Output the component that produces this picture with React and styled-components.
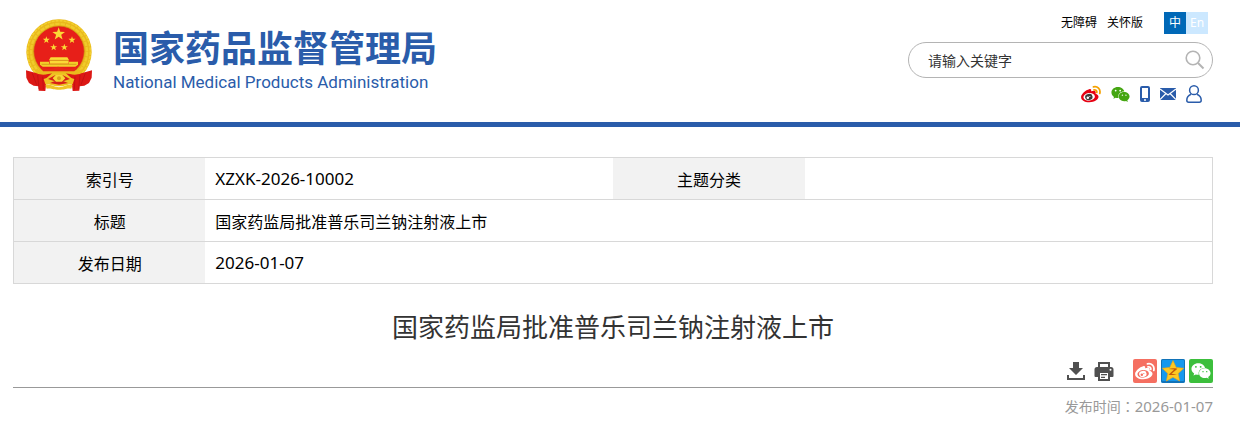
import React from 'react'
import styled, { createGlobalStyle } from 'styled-components'
import { FaWeixin } from 'react-icons/fa'

const GlobalStyle = createGlobalStyle`
    * {
        box-sizing: border-box;
    }
    body {
        margin: 0;
        background: #fff;
        color: #000;
        font-family: 'Noto Sans', 'Noto Sans CJK SC', sans-serif;
        font-size: 16px;
    }
    a {
        color: inherit;
        text-decoration: none;
    }
    svg {
        display: block;
    }
    button, input {
        font-family: inherit;
    }
`

const Header = styled.header`
    display: flex;
    justify-content: space-between;
    align-items: flex-start;
    padding: 12px 27px 20px 24px;
    border-bottom: 5px solid #2a5caa;
`

const Brand = styled.a`
    display: flex;
    align-items: center;
    gap: 17px;
    padding-top: 5px;
    color: #2a5caa;
`

const BrandText = styled.div`
    display: flex;
    flex-direction: column;
    gap: 6px;
    padding-top: 8px;
    white-space: nowrap;
`

const BrandName = styled.span`
    font-family: 'Noto Sans CJK SC', sans-serif;
    font-size: 36px;
    font-weight: 700;
    line-height: 40px;
`

const BrandSub = styled.span`
    font-family: Roboto, sans-serif;
    font-size: 17px;
    line-height: 20px;
`

const Tools = styled.div`
    display: flex;
    flex-direction: column;
    align-items: flex-end;
    gap: 8px;
    width: 305px;
`

const TopLinks = styled.nav`
    display: flex;
    align-items: center;
    gap: 10px;
    padding-right: 5px;
    font-size: 12px;
    line-height: 22px;
`

const Lang = styled.div`
    display: flex;
    margin-left: 11px;
`

const LangLink = styled.a`
    width: 22px;
    height: 22px;
    background: ${props => props.$active ? '#0068b7' : '#cce8ff'};
    color: #fff;
    text-align: center;
`

const SearchBox = styled.form`
    display: flex;
    align-items: center;
    width: 100%;
    height: 36px;
    padding: 0 7px 0 19px;
    border: 1px solid #b4b4b4;
    border-radius: 18px;
    input {
        flex: 1;
        min-width: 0;
        padding: 0;
        border: 0;
        outline: none;
        background: none;
        font-size: 14px;
    }
    input::placeholder {
        color: #333;
        opacity: 1;
    }
    button {
        padding: 0;
        border: 0;
        background: none;
        cursor: pointer;
    }
`

const Social = styled.div`
    display: flex;
    align-items: center;
    gap: 10px;
    height: 16px;
    padding-right: 11px;
    color: #2a5caa;
`

const Main = styled.main`
    padding: 30px 27px 10px 13px;
`

const InfoTable = styled.table`
    width: 100%;
    table-layout: fixed;
    border-collapse: collapse;
    border: 1px solid #d8d8d8;
    tr {
        height: 42px;
        border-bottom: 1px solid #d8d8d8;
    }
    th {
        width: 16%;
        padding: 0;
        background: #f2f2f2;
        font-weight: 400;
    }
    td {
        padding: 0 10px;
    }
`

const Code = styled.span`
    font-size: 17px;
    line-height: 20px;
`

const Title = styled.h1`
    margin: 23px 0 12px;
    color: #333;
    font-size: 26px;
    font-weight: 400;
    line-height: 40px;
    text-align: center;
`

const ActionBar = styled.div`
    display: flex;
    justify-content: flex-end;
    align-items: center;
    gap: 8px;
    padding-bottom: 4px;
    border-bottom: 1px solid #999;
`

const Action = styled.button`
    width: 20px;
    height: 20px;
    padding: 0;
    border: 0;
    background: none;
    color: #505050;
    cursor: pointer;
`

const Shares = styled.div`
    display: flex;
    gap: 4px;
    margin-left: 11px;
`

const Share = styled.a`
    display: flex;
    align-items: center;
    justify-content: center;
    width: 24px;
    height: 24px;
    border-radius: 2px;
    background: ${props => props.$color};
    color: #fff;
`

const Published = styled.p`
    margin: 8px 0 0;
    color: #999;
    font-size: 14px;
    line-height: 20px;
    text-align: right;
    time {
        font-size: 15px;
    }
`

const Colon = styled.span`
    font-family: 'Noto Sans CJK TC', sans-serif;
`

const star = (cx, cy, r) => {
    const points = []
    for (let i = 0; i < 10; i++) {
        const a = -Math.PI / 2 + i * Math.PI / 5
        const d = i % 2 ? r * 0.4 : r
        points.push(`${(cx + d * Math.cos(a)).toFixed(1)},${(cy + d * Math.sin(a)).toFixed(1)}`)
    }
    return points.join(' ')
}

function Emblem() {
    return (
        <svg width="72" height="76" viewBox="27 21 216 228" aria-hidden="true">
            <circle cx="132" cy="126" r="98" fill="#e9b91c" />
            <circle cx="132" cy="126" r="94" fill="none" stroke="#f3d030" strokeWidth="5" strokeDasharray="9 3" />
            <circle cx="132" cy="126" r="84" fill="none" stroke="#f1cb2b" strokeWidth="7" strokeDasharray="13 3" />
            <circle cx="132" cy="124" r="76" fill="#e71f19" stroke="#cf9a12" strokeWidth="2" />
            <g fill="#fbd936">
                <polygon points={star(131, 72, 20)} />
                <polygon points={star(94, 90, 11)} />
                <polygon points={star(171, 90, 11)} />
                <polygon points={star(116, 112, 11)} />
                <polygon points={star(148, 112, 11)} />
                <path d="M107 142h50l5 8h-60zM104 151h57v10h-57z" />
                <path d="M75 155h27v6h60v-6h27v9l-8 6H83l-8-6z" fill="#f3cf2a" />
            </g>
            <path d="M102 151h60M80 163h104" stroke="#c98d10" strokeWidth="2" fill="none" />
            <path d="M62 178c18 4 34 8 47 3 15-7 31-7 46 0 13 5 29 1 47-3l-6 24c-20 12-108 12-128 0z" fill="#eabb1d" />
            <path d="M78 172c22 10 36 3 51-2 17 5 32 12 56 2l-7 12H84z" fill="#e52a17" />
            <path d="M33 181l32 9c18 8 35 2 46 0l-16 18-4 35-20-1-1-13-14-2-14-8-8-16zM231 181l-32 9c-18 8-35 2-46 0l16 18 4 35 20-1 1-13 14-2 14-8 8-16z" fill="#dc1815" />
            <path d="M52 190l13 34M68 195l4 42M83 200l2 38M211 190l-13 34M195 195l-4 42M180 200l-2 38" stroke="#b80f12" strokeWidth="2" fill="none" />
            <path d="M86 207c13-1 19-17 33-17h26c14 0 20 16 33 17l-5 15c-14-1-19 7-41 7s-27-8-41-7z" fill="#efc323" />
            <path d="M99 207l21-11h24l21 11-18 6h-30zM105 219l15-6h24l15 6-27 5z" fill="#d82018" />
            <path d="M113 205l9-10h20l9 10-10 10h-18z" fill="#f7d534" />
            <circle cx="132" cy="205" r="6" fill="#dba51b" />
            <path d="M91 224c12-5 25 8 41 8s29-13 41-8l-4 12c-15-3-18 3-37 3s-22-6-37-3z" fill="#f0c526" />
        </svg>
    )
}

function WeiboMark({ mono }) {
    const body = mono ? '#fff' : '#e60012'
    const eye = mono ? '#f56f61' : '#fff'
    const wave = mono ? '#fff' : '#f5a100'
    return (
        <svg width="20" height="20" viewBox="0 0 24 24" aria-hidden="true">
            <path d="M9.8 6.2c1.8-.7 3 .4 2.3 2.6 2.8-1 5.9-1 5.6 1.5 0 .5-.3 1-.2 1.3 2.2.5 3.5 1.9 3.5 3.7 0 3.4-4.9 6.5-11 6.5-6 0-9.9-2.5-9.9-6.3 0-3.5 5.7-8.4 9.7-9.3z" fill={body} />
            <ellipse cx="9.8" cy="15.4" rx="6.9" ry="4.5" transform="rotate(-7 9.8 15.4)" fill={eye} />
            <ellipse cx="9.4" cy="15.6" rx="4.5" ry="3.8" transform="rotate(-12 9.4 15.6)" fill={mono ? body : '#3e3a39'} />
            <circle cx="8.2" cy="16.5" r="1.5" fill={eye} />
            <circle cx="10.6" cy="15" r=".7" fill={eye} />
            <path d="M15 3.5c4.7-1.2 8.9 2.8 7.5 7.8M15.6 7c2-.4 3.8 1.2 3.3 3.2" fill="none" stroke={wave} strokeWidth="2.1" strokeLinecap="round" />
        </svg>
    )
}

function SearchIcon() {
    return (
        <svg width="20" height="20" viewBox="0 0 20 20" fill="none" stroke="#b4b4b4" aria-hidden="true">
            <circle cx="8" cy="8" r="6.8" strokeWidth="1.6" />
            <path d="M13 13l5.5 5.5" strokeWidth="2" />
        </svg>
    )
}

function PhoneIcon() {
    return (
        <svg width="10" height="16" viewBox="0 0 10 16" aria-hidden="true">
            <path fillRule="evenodd" fill="currentColor" d="M2 0h6a2 2 0 0 1 2 2v12a2 2 0 0 1-2 2H2a2 2 0 0 1-2-2V2a2 2 0 0 1 2-2zM2 2v10h6V2zM5 13a1 1 0 1 0 0 2 1 1 0 0 0 0-2z" />
        </svg>
    )
}

function MailIcon() {
    return (
        <svg width="16" height="12" viewBox="0 0 16 12" aria-hidden="true">
            <path d="M0 0h16v12H0z" fill="currentColor" />
            <path d="M0 1l8 6 8-6M0 11.5l6-6M16 11.5l-6-6" fill="none" stroke="#fff" strokeWidth="1.2" />
        </svg>
    )
}

function UserIcon() {
    return (
        <svg width="16" height="18" viewBox="0 0 16 18" fill="none" stroke="currentColor" strokeWidth="1.5" aria-hidden="true">
            <circle cx="8" cy="5.2" r="4.4" />
            <path d="M5 9.2C2.3 10.3.8 12.4.8 15.2c0 1.3.6 2 1.9 2h10.6c1.3 0 1.9-.7 1.9-2 0-2.8-1.5-4.9-4.2-6" />
        </svg>
    )
}

function DownloadIcon() {
    return (
        <svg width="20" height="20" viewBox="0 0 20 20" aria-hidden="true">
            <path d="M7 1h6v6h4l-7 7-7-7h4z" fill="currentColor" />
            <path d="M2 14v4h16v-4" fill="none" stroke="currentColor" strokeWidth="2" />
        </svg>
    )
}

function PrintIcon() {
    return (
        <svg width="20" height="20" viewBox="0 0 20 20" aria-hidden="true">
            <path d="M5 6V2h10v4" fill="none" stroke="currentColor" strokeWidth="2" />
            <path d="M3 6h14a2.5 2.5 0 0 1 2.5 2.5V15a1 1 0 0 1-1 1h-17a1 1 0 0 1-1-1V8.500A2.5 2.5 0 0 1 3 6z" fill="currentColor" />
            <path d="M5 11h10v8H5z" fill="#fff" stroke="currentColor" strokeWidth="2" />
            <path d="M7 13.700h6M7 16.300h4" stroke="currentColor" strokeWidth="1.3" />
            <circle cx="16.5" cy="8.7" r="1" fill="#fff" />
        </svg>
    )
}

function QzoneIcon() {
    return (
        <svg width="24" height="24" viewBox="0 0 24 24" aria-hidden="true">
            <rect x="0" y="0" width="24" height="24" rx="2" fill="#1273b8" />
            <rect x="1" y="1" width="22" height="21" rx="1" fill="#1598ee" />
            <path d="M12 1.5l3.2 6.9 7.5.9-5.5 5.2 1.4 7.5-6.6-3.7L5.4 22l1.4-7.5-5.5-5.2 7.5-.9z" fill="#fdc922" stroke="#f5a30a" strokeWidth=".6" strokeLinejoin="round" />
            <path d="M7.5 10c3-.8 6-.8 9-.2l-6 5c2 .4 4 .5 6.3.2-2.8 1.2-6 1.3-9.3.7l5.7-5.2c-1.900-.3-3.700-.5-5.700-.5z" fill="#c45a08" />
        </svg>
    )
}

export default function App() {
    return (
        <>
            <GlobalStyle />
            <Header>
                <Brand href="#">
                    <Emblem />
                    <BrandText>
                        <BrandName>国家药品监督管理局</BrandName>
                        <BrandSub>National Medical Products Administration</BrandSub>
                    </BrandText>
                </Brand>
                <Tools>
                    <TopLinks>
                        <a href="#">无障碍</a>
                        <a href="#">关怀版</a>
                        <Lang>
                            <LangLink href="#" $active>中</LangLink>
                            <LangLink href="#">En</LangLink>
                        </Lang>
                    </TopLinks>
                    <SearchBox onSubmit={evt => evt.preventDefault()}>
                        <input name="keyword" type="text" placeholder="请输入关键字" aria-label="请输入关键字" />
                        <button aria-label="搜索"><SearchIcon /></button>
                    </SearchBox>
                    <Social>
                        <a href="#" aria-label="微博"><WeiboMark /></a>
                        <a href="#" aria-label="微信"><FaWeixin size={19} color="#45a612" /></a>
                        <a href="#" aria-label="手机"><PhoneIcon /></a>
                        <a href="#" aria-label="邮箱"><MailIcon /></a>
                        <a href="#" aria-label="用户"><UserIcon /></a>
                    </Social>
                </Tools>
            </Header>
            <Main>
                <InfoTable>
                    <tbody>
                        <tr>
                            <th scope="row">索引号</th>
                            <td><Code>XZXK-2026-10002</Code></td>
                            <th scope="row">主题分类</th>
                            <td></td>
                        </tr>
                        <tr>
                            <th scope="row">标题</th>
                            <td colSpan="3">国家药监局批准普乐司兰钠注射液上市</td>
                        </tr>
                        <tr>
                            <th scope="row">发布日期</th>
                            <td colSpan="3"><Code>2026-01-07</Code></td>
                        </tr>
                    </tbody>
                </InfoTable>
                <Title>国家药监局批准普乐司兰钠注射液上市</Title>
                <ActionBar>
                    <Action aria-label="下载"><DownloadIcon /></Action>
                    <Action aria-label="打印"><PrintIcon /></Action>
                    <Shares>
                        <Share href="#" aria-label="分享到微博" $color="#f56f61"><WeiboMark mono /></Share>
                        <Share href="#" aria-label="分享到QQ空间" $color="#1598ee"><QzoneIcon /></Share>
                        <Share href="#" aria-label="分享到微信" $color="#3cbf3c"><FaWeixin size={20} /></Share>
                    </Shares>
                </ActionBar>
                <Published>发布时间<Colon>：</Colon><time dateTime="2026-01-07">2026-01-07</time></Published>
            </Main>
        </>
    )
}
